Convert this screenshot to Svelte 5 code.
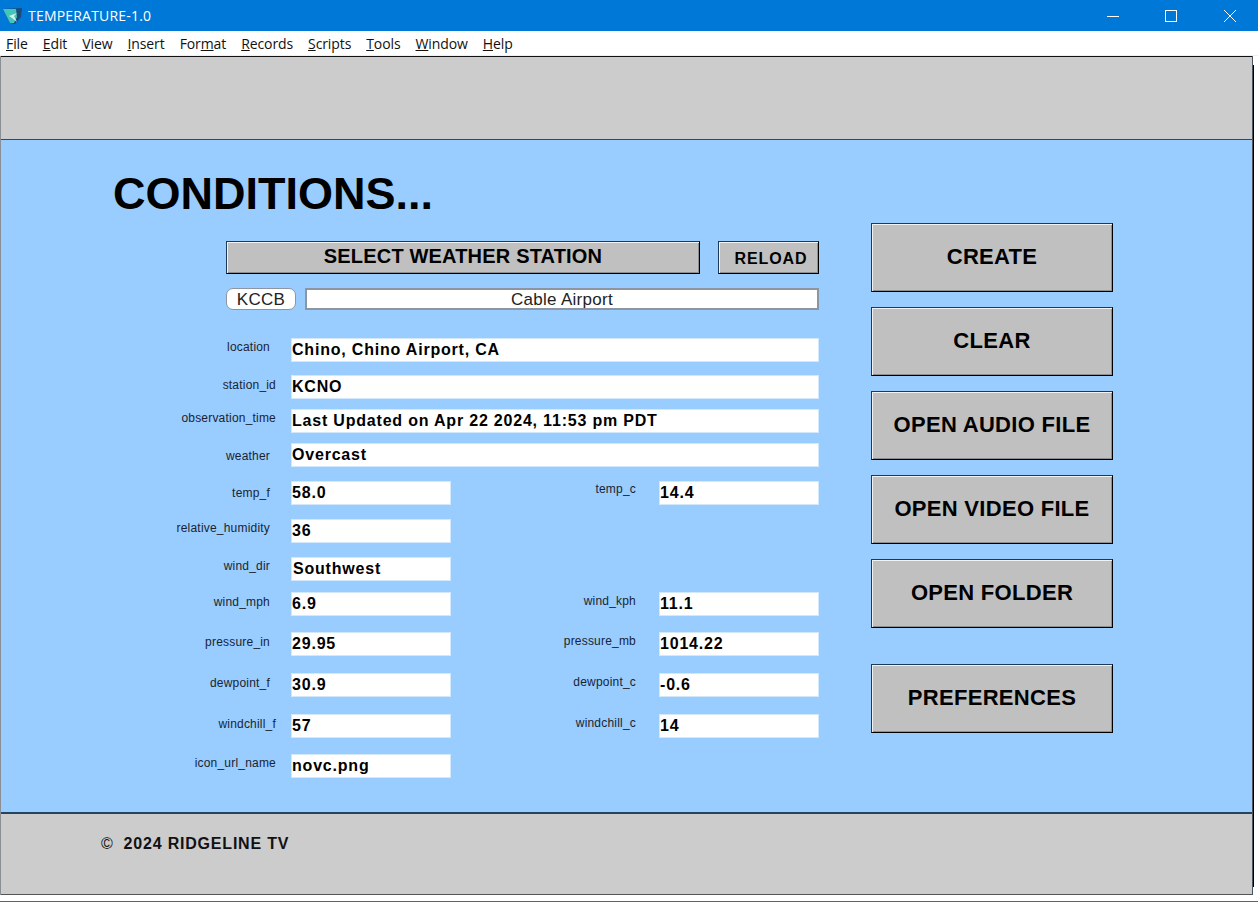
<script>
	const menus = [
		['', 'F', 'ile'],
		['', 'E', 'dit'],
		['', 'V', 'iew'],
		['', 'I', 'nsert'],
		['For', 'm', 'at'],
		['', 'R', 'ecords'],
		['', 'S', 'cripts'],
		['', 'T', 'ools'],
		['', 'W', 'indow'],
		['', 'H', 'elp']
	];

	// dy = label drop inside its row, short = label stops 6px before the column edge
	const rows = [
		{ label: 'location', dy: 2, short: true, value: 'Chino, Chino Airport, CA', wide: true },
		{ label: 'station_id', dy: 3, value: 'KCNO', wide: true },
		{ label: 'observation_time', dy: 2, value: 'Last Updated on Apr 22 2024, 11:53 pm PDT', wide: true },
		{ label: 'weather', dy: 6, short: true, value: 'Overcast', wide: true },
		{ label: 'temp_f', dy: 5, short: true, value: '58.0', label2: 'temp_c', dy2: 1, value2: '14.4' },
		{ label: 'relative_humidity', dy: 2, short: true, value: '36' },
		{ label: 'wind_dir', dy: 2, short: true, value: 'Southwest', nudge: true },
		{ label: 'wind_mph', dy: 3, short: true, value: '6.9', label2: 'wind_kph', dy2: 2, value2: '11.1' },
		{ label: 'pressure_in', dy: 3, short: true, value: '29.95', label2: 'pressure_mb', dy2: 2, value2: '1014.22' },
		{ label: 'dewpoint_f', dy: 3, short: true, value: '30.9', label2: 'dewpoint_c', dy2: 2, value2: '-0.6' },
		{ label: 'windchill_f', dy: 3, value: '57', label2: 'windchill_c', dy2: 2, value2: '14' },
		{ label: 'icon_url_name', dy: 2, value: 'novc.png' }
	];

	const actions = ['CREATE', 'CLEAR', 'OPEN AUDIO FILE', 'OPEN VIDEO FILE', 'OPEN FOLDER'];
</script>

<div class="window">
	<header class="titlebar">
		<svg class="appicon" width="20" height="17" viewBox="0 0 20 17">
			<path d="M0 1 L19 0 L18 9 L12 16 L7 15 Z" fill="#1d4a78" />
			<path d="M0 1 L13 1 L14 9 L11 15 L7 15 Z" fill="#45c4b8" />
			<path d="M6 8 L14 5 L11 8 L14 14 L9 10 Z" fill="#d4f1ee" />
		</svg>
		<span class="apptitle">TEMPERATURE-1.0</span>
		<div class="controls">
			<span class="ctl">
				<svg width="12" height="12" viewBox="0 0 12 12"><path d="M0 6.5 H12" stroke="#fff" fill="none" /></svg>
			</span>
			<span class="ctl">
				<svg width="12" height="12" viewBox="0 0 12 12"><rect x="0.5" y="0.5" width="11" height="11" stroke="#fff" fill="none" /></svg>
			</span>
			<span class="ctl">
				<svg width="12" height="12" viewBox="0 0 12 12"><path d="M0 0 L12 12 M12 0 L0 12" stroke="#fff" fill="none" /></svg>
			</span>
		</div>
	</header>

	<nav class="menubar">
		{#each menus as [pre, key, post]}
			<span class="menu">{pre}<u>{key}</u>{post}</span>
		{/each}
	</nav>

	<div class="layout">
		<div class="band top"></div>

		<main class="body">
			<section class="left">
				<h1>CONDITIONS...</h1>

				<div class="station">
					<button class="bevel select">SELECT WEATHER STATION</button>
					<button class="bevel reload">RELOAD</button>
				</div>

				<div class="picked">
					<span class="code">KCCB</span>
					<span class="name">Cable Airport</span>
				</div>

				<div class="fields">
					{#each rows as row}
						<span class="label" class:short={row.short} style="padding-top: {row.dy}px">{row.label}</span>
						<span class="value" class:wide={row.wide} class:nudge={row.nudge}>{row.value}</span>
						{#if !row.wide}
							<span class="label second" style="padding-top: {row.dy2 ?? 0}px">{row.label2 ?? ''}</span>
							{#if row.value2}
								<span class="value">{row.value2}</span>
							{:else}
								<span></span>
							{/if}
						{/if}
					{/each}
				</div>
			</section>

			<aside class="right">
				{#each actions as action}
					<button class="bevel action">{action}</button>
				{/each}
				<button class="bevel action prefs">PREFERENCES</button>
			</aside>
		</main>

		<footer class="band bottom">
			<span class="copy">©</span>
			<span>2024 RIDGELINE TV</span>
		</footer>
	</div>
	<div class="edge"></div>
</div>

<style>
	:global(body) {
		margin: 0;
		background: #fff;
	}
	.window {
		width: 1258px;
		height: 902px;
		overflow: hidden;
		display: flex;
		flex-direction: column;
		font-family: 'Liberation Sans', Arial, sans-serif;
		color: #000;
	}
	.titlebar {
		height: 31px;
		flex: none;
		background: #0078d7;
		color: #fff;
		display: flex;
		align-items: center;
		padding-left: 3px;
		box-sizing: border-box;
	}
	.appicon {
		margin-right: 5px;
		margin-top: 1px;
	}
	.apptitle {
		font-family: 'Open Sans', sans-serif;
		font-size: 14px;
		letter-spacing: 0.2px;
	}
	.controls {
		margin-left: auto;
		display: flex;
		margin-right: -1px;
	}
	.ctl {
		width: 58.5px;
		height: 30px;
		display: flex;
		align-items: center;
		justify-content: center;
	}
	.menubar {
		height: 24px;
		flex: none;
		background: #fff;
		border-bottom: 1px solid #f0f0f0;
		display: flex;
		align-items: center;
		padding-left: 6px;
		gap: 15px;
		font-family: 'Open Sans', sans-serif;
		font-size: 14px;
		letter-spacing: -0.1px;
		color: #111;
	}
	.layout {
		position: relative;
		width: 1253px;
		height: 839px;
		flex: none;
		display: flex;
		flex-direction: column;
		box-sizing: border-box;
		border-left: 1px solid #8a8f96;
		border-right: 1px solid #4a5560;
	}
	/* black drop edge on the right of the panel */
	.layout::after {
		content: '';
		position: absolute;
		right: -2px;
		top: 9px;
		bottom: 8px;
		width: 1px;
		background: #000;
	}
	.band {
		background: #ccc;
		flex: none;
		box-sizing: border-box;
	}
	.top {
		height: 84px;
		border-top: 1px solid #111;
		border-bottom: 1px solid #3d4650;
	}
	.body {
		height: 672px;
		flex: none;
		background: #99ccff;
		display: flex;
		padding-left: 112px;
		box-sizing: border-box;
	}
	.left {
		width: 706px;
		flex: none;
	}
	h1 {
		margin: 0;
		padding-top: 29px;
		height: 101px;
		box-sizing: border-box;
		font-size: 45px;
		line-height: 50px;
		font-weight: 700;
	}
	.bevel {
		display: block;
		padding: 0;
		background: #c0c0c0;
		color: #000;
		font-family: inherit;
		font-weight: 700;
		box-sizing: border-box;
		border: 1px solid #000;
		border-top-color: #1b3a5c;
		border-left-color: #1b3a5c;
		box-shadow:
			inset 1px 1px 0 #f2f2f2,
			inset -1px -1px 0 #8f8f8f;
	}
	.station {
		display: flex;
		padding-left: 113px;
		gap: 18px;
	}
	.select {
		width: 474px;
		height: 33px;
		padding-bottom: 2px;
		font-size: 20px;
		letter-spacing: 0.18px;
	}
	.reload {
		width: 101px;
		height: 33px;
		font-size: 16px;
		letter-spacing: 0.9px;
		padding: 2px 0 0 5px;
	}
	.picked {
		display: flex;
		gap: 9px;
		padding-left: 113px;
		margin-top: 14px;
		font-size: 17px;
		letter-spacing: 0.3px;
	}
	.code,
	.name {
		height: 22px;
		line-height: 21px;
		box-sizing: border-box;
		background: #fff;
		border: 1px solid #8c96a0;
		text-align: center;
		color: #222;
	}
	.code {
		width: 70px;
		border-radius: 7px;
	}
	.name {
		width: 514px;
		border-width: 2px;
		line-height: 19px;
	}
	.fields {
		display: grid;
		grid-template-columns: 178px 160px 208px 160px;
		grid-template-rows: 37px 34px 34px 38px 38px 38px 35px 40px 41px 41px 40px 25px;
		margin-top: 28px;
	}
	.label {
		font-size: 12px;
		line-height: 14px;
		letter-spacing: 0.2px;
		text-align: right;
		color: #1a2430;
		padding-right: 15px;
		white-space: nowrap;
	}
	.label.short {
		padding-right: 21px;
	}
	.label.second {
		padding-right: 23px;
	}
	.value {
		height: 24px;
		line-height: 23px;
		box-sizing: border-box;
		background: #fff;
		box-shadow: 0 0 0 1px #d4e8fb inset;
		font-size: 16px;
		font-weight: 700;
		letter-spacing: 0.8px;
		padding-left: 1px;
		white-space: nowrap;
	}
	.value.wide {
		grid-column: span 3;
	}
	.value.nudge {
		padding-left: 2px;
	}
	.right {
		width: 242px;
		margin-left: 52px;
		padding-top: 83px;
		flex: none;
		display: flex;
		flex-direction: column;
		gap: 15px;
	}
	.action {
		width: 242px;
		height: 69px;
		flex: none;
		padding-bottom: 1px;
		font-size: 22px;
		letter-spacing: 0.3px;
	}
	.prefs {
		margin-top: 21px;
	}
	.bottom {
		height: 83px;
		border-top: 2px solid #24445f;
		border-bottom: 1px solid #555;
		padding: 20px 0 0 100px;
		font-size: 16px;
		font-weight: 700;
		letter-spacing: 0.8px;
		color: #111;
		display: flex;
		gap: 10px;
		line-height: 20px;
	}
	.copy {
		font-weight: 400;
	}
	.edge {
		height: 1px;
		margin-top: 6px;
		background: #1c74bd;
		flex: none;
	}
</style>
